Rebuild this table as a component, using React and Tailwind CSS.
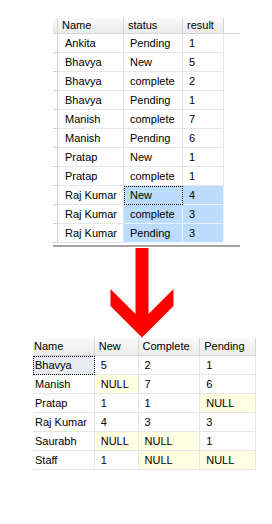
import React from "react";

const font = { fontFamily: '"Liberation Sans", Arial, sans-serif' };

const source = [
  ["Ankita", "Pending", "1"],
  ["Bhavya", "New", "5"],
  ["Bhavya", "complete", "2"],
  ["Bhavya", "Pending", "1"],
  ["Manish", "complete", "7"],
  ["Manish", "Pending", "6"],
  ["Pratap", "New", "1"],
  ["Pratap", "complete", "1"],
  ["Raj Kumar", "New", "4"],
  ["Raj Kumar", "complete", "3"],
  ["Raj Kumar", "Pending", "3"],
];

const pivot = [
  ["Bhavya", "5", "2", "1"],
  ["Manish", null, "7", "6"],
  ["Pratap", "1", "1", null],
  ["Raj Kumar", "4", "3", "3"],
  ["Saurabh", null, null, "1"],
  ["Staff", "1", null, null],
];

const head =
  "h-full flex items-center bg-gradient-to-b from-[#fafafa] to-[#ebebeb] border-r border-[#d6d6d6]";
const cell = "h-full flex items-center border-r border-[#e6e6e6]";

function SourceGrid() {
  return (
    <div className="ml-[53px] mt-[18px] w-[187px] pb-[2px] border-b-2 border-[#a3a3a3]">
      <div className="flex h-[16px] border-b border-[#d6d6d6]">
        <div className={`${head} w-[5px]`} />
        <div className={`${head} w-[66px] pl-[4px]`}>Name</div>
        <div className={`${head} w-[59px] pl-[4px]`}>status</div>
        <div className={`${head} w-[41px] pl-[4px]`}>result</div>
      </div>
      {source.map(([name, status, result], i) => {
        const sel = i >= 8;
        return (
          <div key={i} className="flex h-[19px]">
            <div className="h-full w-[5px] border-r border-b border-[#d0d0d0] bg-white" />
            <div className={`${cell} w-[66px] pl-[7px] border-b bg-white`}>{name}</div>
            <div
              className={`${cell} w-[59px] pl-[6px] border-b ${
                sel ? "bg-[#bbdcfd] border-[#e8f2fd]" : "bg-white"
              } ${i === 8 ? "outline-1 outline-dotted outline-black -outline-offset-1" : ""}`}
            >
              {status}
            </div>
            <div
              className={`${cell} w-[41px] pl-[6px] border-b ${
                sel ? "bg-[#bbdcfd] border-[#e8f2fd]" : "bg-white"
              }`}
            >
              {result}
            </div>
          </div>
        );
      })}
    </div>
  );
}

function Arrow() {
  return (
    <svg width="272" height="91" viewBox="0 0 272 91" className="block">
      <polygon
        points="135.5,1 148.5,1 148.5,67 173.5,42 173.5,59 142,90.5 110.5,59 110.5,42 135.5,67"
        fill="#ff0000"
      />
    </svg>
  );
}

function PivotGrid() {
  const widths = ["w-[44px]", "w-[62px]", "w-[56px]"];
  return (
    <div className="ml-[33px] w-[223px]">
      <div className="flex h-[18px] border-b border-[#d6d6d6]">
        <div className={`${head} w-[62px] pl-[1px]`}>Name</div>
        <div className={`${head} w-[44px] pl-[4px]`}>New</div>
        <div className={`${head} w-[62px] pl-[4px]`}>Complete</div>
        <div className={`${head} w-[56px] pl-[4px]`}>Pending</div>
      </div>
      {pivot.map(([name, ...vals], i) => (
        <div key={i} className="flex h-[19px]">
          <div
            className={`${cell} w-[62px] pl-[2px] border-b ${
              i === 0
                ? "bg-[#e7ebf0] outline-1 outline-dotted outline-black -outline-offset-1"
                : "bg-white"
            }`}
          >
            {name}
          </div>
          {vals.map((v, j) => (
            <div
              key={j}
              className={`${cell} ${widths[j]} pl-[6px] border-b ${
                v === null ? "bg-[#ffffe1]" : "bg-white"
              }`}
            >
              {v === null ? "NULL" : v}
            </div>
          ))}
        </div>
      ))}
    </div>
  );
}

export default function App() {
  return (
    <div className="w-[272px] h-[524px] bg-white text-[11px] text-black leading-none overflow-hidden" style={font}>
      <SourceGrid />
      <Arrow />
      <PivotGrid />
    </div>
  );
}
